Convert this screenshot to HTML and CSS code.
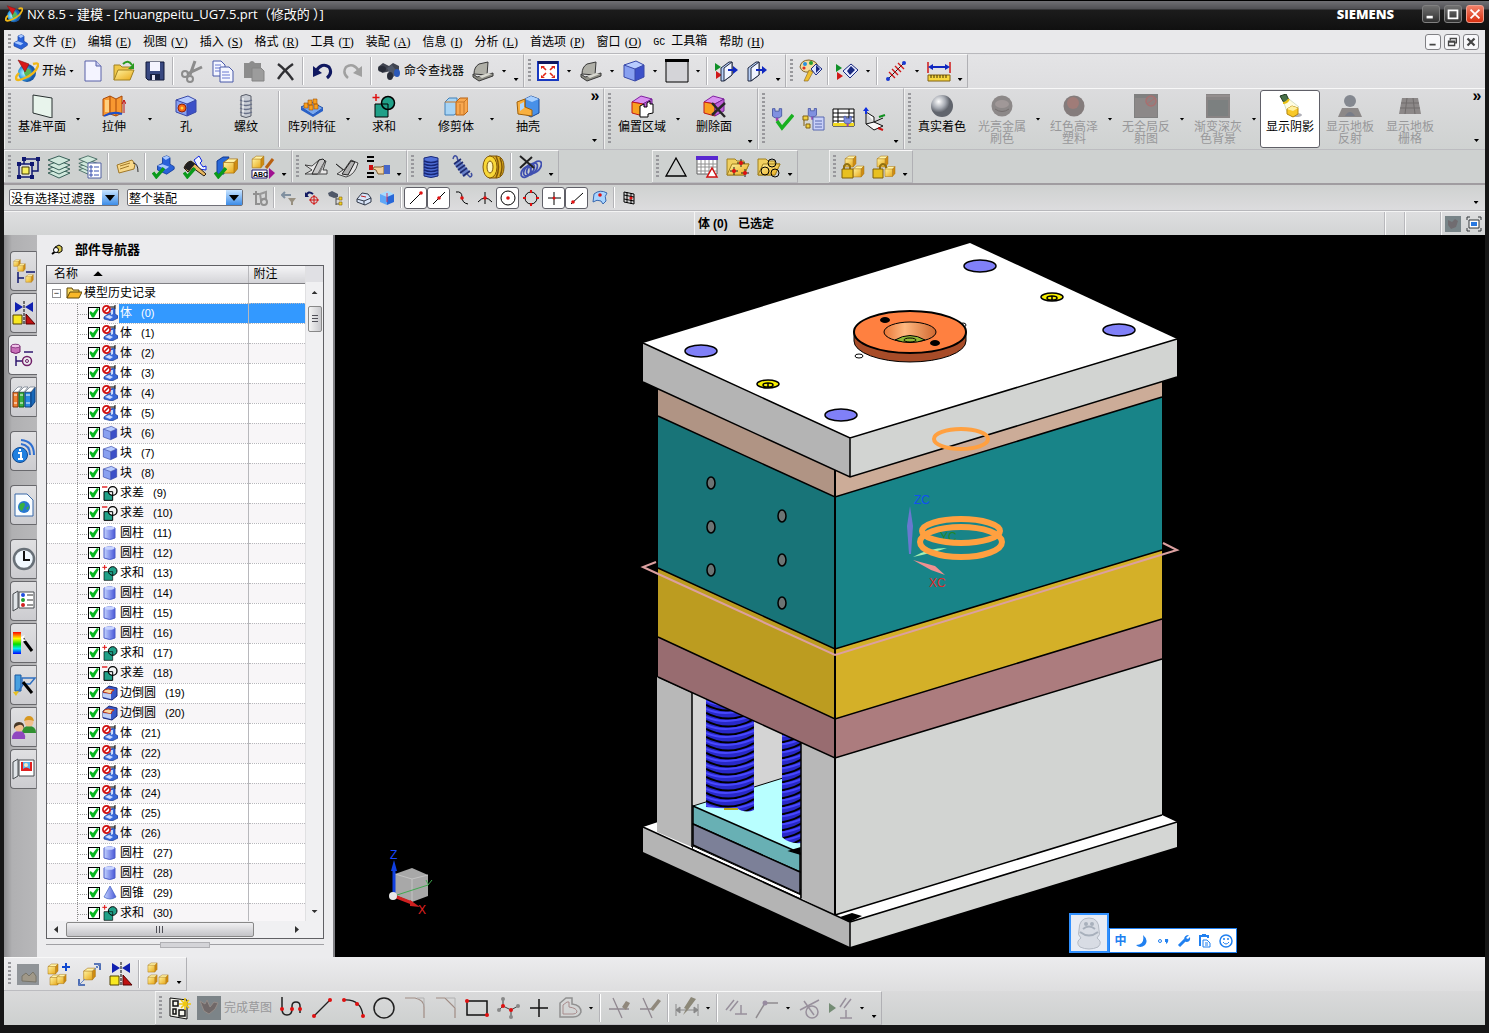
FILE: index.html
```html
<!DOCTYPE html>
<html lang="zh-CN">
<head>
    <meta charset="utf-8">
    <title>NX 8.5 - 建模</title>
    <link rel="stylesheet" href="styles.css">
</head>
<body>
    <!-- icon sprite -->
    <svg class="sprite" width="0" height="0">
        <defs>
            <linearGradient id="g-blue"><stop offset="0" stop-color="#c4d4ff"/><stop offset="1" stop-color="#4a58d8"/></linearGradient>
            <linearGradient id="g-sel" x2="0" y2="1"><stop offset="0" stop-color="#7fc4ff"/><stop offset="1" stop-color="#1668d8"/></linearGradient>
            <linearGradient id="g-yel" x2="1" y2="1"><stop offset="0" stop-color="#fff3a0"/><stop offset="1" stop-color="#e8a818"/></linearGradient>
            <linearGradient id="g-rain" x2="0" y2="1"><stop offset="0" stop-color="#f00"/><stop offset=".3" stop-color="#ff0"/><stop offset=".55" stop-color="#0d0"/><stop offset=".75" stop-color="#0ee"/><stop offset="1" stop-color="#00f"/></linearGradient>
            <radialGradient id="g-ball" cx=".35" cy=".3"><stop offset="0" stop-color="#fff"/><stop offset=".6" stop-color="#a8acb4"/><stop offset="1" stop-color="#60646c"/></radialGradient>
            <radialGradient id="g-globe" cx=".35" cy=".5"><stop offset="0" stop-color="#c8f8ff"/><stop offset=".6" stop-color="#38a8e8"/><stop offset="1" stop-color="#1858a8"/></radialGradient>
        </defs>

        <symbol id="cube-y" viewBox="0 0 24 24"><path d="M2 7l7-5h13l-5 5z" fill="#fff4a8"/><path d="M2 7h15v15H2z" fill="url(#g-yel)"/><path d="M17 7l5-5v14l-5 6z" fill="#d08c10"/><path d="M2 7l7-5h13v14l-5 6H2zM2 7h15v15M17 7l5-5" fill="none" stroke="#a87008"/></symbol>
        <symbol id="cube-b" viewBox="0 0 24 24"><path d="M2 6l12-4 8 4-9 4z" fill="#b8ccff"/><path d="M2 6l11 4v12L2 18z" fill="#88a0f0"/><path d="M13 10l9-4v12l-9 4z" fill="#3c50c8"/><path d="M2 6l12-4 8 4v12l-9 4-11-4zM2 6l11 4v12M13 10l9-4" fill="none" stroke="#3848a8"/></symbol>
        <symbol id="ok" viewBox="0 0 12 12"><path d="M1 6l3 4 7-8" fill="none" stroke="#0a9a1a" stroke-width="3"/></symbol>
        <symbol id="block-l" viewBox="0 0 24 24"><path d="M3 13l6-3V3l5-2 4 2v8l5 3v3l-9 6-11-5z" fill="#2a62d8" stroke="#123c9c"/><path d="M9 3l5-2 4 2-5 3zM3 13l6-2 8 3-4 3z" fill="#a8c8ff"/></symbol>

        <symbol id="nx" viewBox="0 0 24 24"><circle cx="12" cy="14" r="9" fill="url(#g-globe)"/><path d="M9 10q6-2 7 3l-3 6q-5-3-4-9z" fill="#58b858"/><path d="M18 5q6-2 5 2-3 8-13 12-9 4-9 0 0-2 3-5" fill="none" stroke="#f0b818" stroke-width="2.400"/><path d="M3 1l11 4-4 8z" fill="#d81818" stroke="#801010" stroke-width=".6"/></symbol>
        <symbol id="new" viewBox="0 0 24 24"><path d="M4 2h11l5 5v15H4z" fill="#f4f4ff" stroke="#5860a8"/><path d="M15 2v5h5" fill="#c8ccf0" stroke="#5860a8"/></symbol>
        <symbol id="open" viewBox="0 0 24 24"><path d="M2 21V6h6l2 2h9v5" fill="#f0c848" stroke="#a08020"/><path d="M2 21l4-10h16l-4 10z" fill="url(#g-yel)" stroke="#a08020"/><path d="M11 5q5-5 9 1" fill="none" stroke="#2a9a20" stroke-width="2"/><path d="M22 4v6h-6z" fill="#2a9a20"/></symbol>
        <symbol id="save" viewBox="0 0 24 24"><path d="M3 3h18v18H5l-2-2z" fill="#384880" stroke="#101838"/><path d="M7 3h10v9H7z" fill="#f4f4ff"/><path d="M7 15h10v6H7z" fill="#182040"/><path d="M9 16h3v5H9z" fill="#e0e0f0"/></symbol>
        <symbol id="cut" viewBox="0 0 24 24"><path d="M15 2l-5 14M22 8L7 15" stroke="#8c8c8c" stroke-width="3" fill="none"/><circle cx="5" cy="15" r="3" fill="none" stroke="#8c8c8c" stroke-width="2"/><circle cx="10" cy="20" r="3" fill="none" stroke="#8c8c8c" stroke-width="2"/></symbol>
        <symbol id="copy" viewBox="0 0 24 24"><path d="M2 2h8l4 4v11H2z" fill="#f4f6ff" stroke="#4858a8"/><path d="M9 8h9l4 4v11H9z" fill="#f4f6ff" stroke="#4858a8"/><path d="M4 6h6M4 9h5M4 12h5M11 13h7M11 16h8M11 19h8" stroke="#6878d0"/></symbol>
        <symbol id="paste" viewBox="0 0 24 24"><path d="M2 4h5q3-4 6 0h6v15H2z" fill="#8c8c8c"/><path d="M10 9h9l3 3v10H10z" fill="#9c9c9c" stroke="#848484"/></symbol>
        <symbol id="del" viewBox="0 0 24 24"><path d="M5 5q8 6 15 16M20 5Q11 11 5 20" stroke="#303034" stroke-width="2.400" fill="none"/></symbol>
        <symbol id="undo" viewBox="0 0 24 24"><path d="M6 12q6-9 13-4 4 6-2 11" fill="none" stroke="#101860" stroke-width="3"/><path d="M3 7v11l9-4z" fill="#101860"/></symbol>
        <symbol id="redo" viewBox="0 0 24 24"><path d="M18 12q-6-9-13-4-4 6 2 11" fill="none" stroke="#a0a0a0" stroke-width="2.400"/><path d="M21 7v11l-9-4z" fill="#a0a0a0"/></symbol>
        <symbol id="find" viewBox="0 0 24 24"><path d="M1 8l5-4 6 3 4-3 6 3v4l-8 1-9 2z" fill="#404450"/><ellipse cx="5" cy="10" rx="4" ry="3" fill="#282c38"/><path d="M10 9l5-3 6 8-6 5z" fill="#505868"/><ellipse cx="13" cy="17" rx="3" ry="4" fill="#282c38"/><ellipse cx="20" cy="14" rx="3" ry="4" fill="#2a58b8"/></symbol>
        <symbol id="laptop" viewBox="0 0 24 24"><path d="M3 15q0-7 5-10l9-2-1 13z" fill="#b0b0a8" stroke="#383838"/><path d="M2 15l4 3 16-4v3L8 22l-6-4z" fill="#8c8c84" stroke="#383838"/><path d="M8 17l9-3 4 1-10 4z" fill="#d8d8d0"/></symbol>
        <symbol id="fit" viewBox="0 0 24 24"><path d="M2 3h20v18H2z" fill="#fff" stroke="#1838c0" stroke-width="2"/><path d="M2 2h20v3H2z" fill="#101860"/><path d="M10 11L7 8M14 11l3-3M10 14l-3 3M14 14l3 3" stroke="#e02818" stroke-width="1.600"/><path d="M5 7h4l-4 3zM19 7h-4l4 3zM5 19h4l-4-3zM19 19h-4l4-3z" fill="#e02818"/></symbol>
        <symbol id="rect" viewBox="0 0 24 24"><path d="M1 1h22v22H1z" fill="#d4d4d8" stroke="#000"/><path d="M0 0h24v3H0z"/></symbol>
        <symbol id="book-a" viewBox="0 0 24 24"><path d="M1 4l6 4-6 4z" fill="#109028"/><path d="M2 12l6 4-6 4z" fill="#d01818"/><path d="M7 9l8-6h3v13l-8 6H7z" fill="#b8d0f8" stroke="#202840"/><path d="M10 9l8-6v13l-8 6z" fill="#f0f4ff" stroke="#202840"/><path d="M14 11h6" stroke="#1028c0" stroke-width="2"/><path d="M19 7l5 4-5 4z" fill="#1028c0"/></symbol>
        <symbol id="book-b" viewBox="0 0 24 24"><path d="M3 9l8-6h3v13l-8 6H3z" fill="#b8d0f8" stroke="#202840"/><path d="M6 9l8-6v13l-8 6z" fill="#f0f4ff" stroke="#202840"/><path d="M11 11h7" stroke="#1028c0" stroke-width="2"/><path d="M17 7l5 4-5 4z" fill="#1028c0"/></symbol>
        <symbol id="palette" viewBox="0 0 24 24"><path d="M2 8q1-7 9-7 9 1 9 8-1 4-6 3l-3 1q-7 1-9-5z" fill="#f4dca0" stroke="#806020"/><circle cx="7" cy="5" r="2" fill="#2890e0"/><circle cx="13" cy="4" r="2" fill="#28a030"/><circle cx="6" cy="9" r="1.600" fill="#e03020"/><path d="M6 22l5-11 4 2-5 9z" fill="#f0c030" stroke="#806020" stroke-width=".6"/><path d="M13 10l5-5 6 5-6 6z" fill="#dce4ff" stroke="#182880"/><path d="M18 6l4 4-4 4z" fill="#182880"/></symbol>
        <symbol id="showhide" viewBox="0 0 24 24"><path d="M1 5l6 4-6 4z" fill="#109028"/><path d="M2 13l6 4-6 4z" fill="#d01818"/><path d="M8 12l8-7 7 6-8 8z" fill="#e8ecff" stroke="#182880"/><path d="M12 12l4-5 4 4-5 5z" fill="#182880"/></symbol>
        <symbol id="measure" viewBox="0 0 24 24"><path d="M4 20L20 4" stroke="#181818"/><path d="M5 13l6 6M8 10l6 6M11 7l6 6M14 4l6 6" stroke="#d01818" stroke-width="1.400"/><circle cx="4" cy="20" r="2" fill="#1838d0"/><circle cx="20" cy="4" r="2" fill="#1838d0"/></symbol>
        <symbol id="ruler" viewBox="0 0 24 24"><path d="M1 3v11M23 3v11" stroke="#d01818" stroke-width="1.500"/><path d="M3 8h18" stroke="#1028c0" stroke-width="2"/><path d="M1 8l5-3v6zM23 8l-5-3v6z" fill="#1028c0"/><path d="M1 16h22v6H1z" fill="#f8d840" stroke="#806010"/><path d="M4 16v3M7 16v3M10 16v3M13 16v3M16 16v3M19 16v3" stroke="#403000"/></symbol>

        <symbol id="plane" viewBox="0 0 24 24"><path d="M3 1l19 3v20L3 19z" fill="#e8f4ec" stroke="#283030"/></symbol>
        <symbol id="extrude" viewBox="0 0 24 24"><path d="M1 5l7-3 6 3 6-3v17l-6 3-6-2-7 2z" fill="#f89830" stroke="#a84808"/><path d="M8 2v18M14 5v17" stroke="#a84808"/><path d="M3 6h4v12H3z" fill="#ffd080"/><path d="M2 22q9-5 18-2" stroke="#2050c8" stroke-width="2" fill="none"/><path d="M22 6v13M20 10l2-4 2 4" stroke="#c01010" fill="none"/></symbol>
        <symbol id="hole" viewBox="0 0 24 24"><use href="#cube-b"/><circle cx="8" cy="14" r="4" fill="#f86818" stroke="#902008"/><circle cx="8" cy="14" r="1.500" fill="#ffd040"/></symbol>
        <symbol id="thread" viewBox="0 0 24 24"><path d="M7 2q5-3 10 0v20q-5 3-10 0z" fill="#c8ccd4" stroke="#585c68"/><path d="M6 6q6 3 12 0M6 10q6 3 12 0M6 14q6 3 12 0M6 18q6 3 12 0" fill="none" stroke="#687088" stroke-width="1.300"/><path d="M9 4v17" stroke="#fff"/></symbol>
        <symbol id="pattern" viewBox="0 0 24 24"><path d="M1 13l11-5 11 6-10 7z" fill="#78a8f0" stroke="#2050a8"/><path d="M1 13v3l12 7 10-6v-3l-10 7z" fill="#2860c8"/><g fill="#f8a020" stroke="#a05008" stroke-width=".6"><path d="M4 9h4v5H4zM8 6h4v5H8zM13 5h4v5h-4zM9 11h4v5H9zM14 10h4v5h-4z"/></g></symbol>
        <symbol id="unite" viewBox="0 0 24 24"><path d="M3 10h13v13H3z" fill="#20a088" stroke="#000"/><circle cx="16" cy="9" r="6.500" fill="#20a088" stroke="#000" stroke-width="1.500"/><path d="M9.500 10h6.500v5.500" fill="none" stroke="#000"/><path d="M4 0v7M0.500 3.500h7" stroke="#e01010" stroke-width="1.500"/></symbol>
        <symbol id="subtract" viewBox="0 0 24 24"><path d="M3 10h13v13H3z" fill="#20a088" stroke="#000" stroke-width="1.500"/><circle cx="16" cy="9" r="6.500" fill="#f4f4f4" stroke="#000" stroke-width="2"/><path d="M10 10h6v5" fill="none" stroke="#000" stroke-width="1.500"/><path d="M0 3h8" stroke="#e01010" stroke-width="2"/></symbol>
        <symbol id="trim" viewBox="0 0 24 24"><path d="M1 8l4-4h8v15l-3 2H1z" fill="#a8d4f4" stroke="#4080b8"/><path d="M12 8l4-4h8v13l-4 4h-8z" fill="#f8a850" stroke="#b86010"/><path d="M12 8h8l4-4M20 8v13M1 8h11M16 10v10" stroke="#c87828" fill="none"/></symbol>
        <symbol id="shell" viewBox="0 0 24 24"><path d="M9 5l6-3 8 3v14l-8 4-6-3z" fill="#4890e8" stroke="#184898"/><path d="M9 5l6-3 8 3-7 3z" fill="#a8d0ff"/><path d="M1 8l8-3v8l7 3v6L2 20z" fill="#f8b040" stroke="#a06008"/><path d="M4 10l4-2v6l-4 3z" fill="#b0d8ff"/></symbol>
        <symbol id="cube-m" viewBox="0 0 24 24"><path d="M2 8l9-6 11 3-9 5z" fill="#d890f0" stroke="#8020a0"/><path d="M2 8l11 2v12L2 19z" fill="#f8a020" stroke="#c01818"/><path d="M13 10l9-5v12l-9 5z" fill="#c060d8" stroke="#702090"/></symbol>
        <symbol id="offset" viewBox="0 0 24 24"><use href="#cube-m"/><path d="M10 12l4-2v3h3V9l3-2v3h3v9l-5 1v3h-8z" fill="#fff" stroke="#000"/></symbol>
        <symbol id="delface" viewBox="0 0 24 24"><use href="#cube-m"/><path d="M10 9l13 14M23 9L10 21" stroke="#282828" stroke-width="2.400"/></symbol>
        <symbol id="plug" viewBox="0 0 24 24"><path d="M3 2h3v3h5V2h3v9l-3 2H6l-3-2z" fill="#8090e0" stroke="#4050a0"/><path d="M7 13h3v4H7z" fill="#a040b0"/></symbol>
        <symbol id="pchk" viewBox="0 0 24 24"><use href="#plug" width="20" height="20"/><path d="M7 14l5 7L23 8" fill="none" stroke="#18b020" stroke-width="3.500"/></symbol>
        <symbol id="ptree" viewBox="0 0 24 24"><use href="#plug" x="5" width="18" height="18"/><path d="M2 9h5v4H2zM5 17h4v4H5zM3 13v6" fill="#f0d040" stroke="#806010"/><path d="M12 10h11v13H12z" fill="#c8d0f8" stroke="#5868b0"/><path d="M14 14h7M14 17h7M14 20h7" stroke="#5868b0"/></symbol>
        <symbol id="pgrid" viewBox="0 0 24 24"><path d="M1 2h21v17H1z" fill="#fff" stroke="#000"/><path d="M1 6h21M1 10h21M1 14h21M6 2v17M17 2v17" stroke="#000"/><path d="M1 16h21v3H1z" fill="#f0d820"/><use href="#plug" x="10" y="8" width="16" height="16"/></symbol>
        <symbol id="csys" viewBox="0 0 24 24"><path d="M3 5v12l8-2 9 4-9 4-8-6M3 5l8 5v5M11 15l9-4" fill="#f8f8f8" stroke="#101010"/><path d="M3 7V1" stroke="#1030e0" stroke-width="2"/><path d="M0 4h6L3 0z" fill="#1030e0"/><path d="M16 10l6-2" stroke="#109020" stroke-width="2"/><path d="M15 21l5 2" stroke="#d01010" stroke-width="2"/></symbol>
        <symbol id="ball" viewBox="0 0 24 24"><circle cx="12" cy="12" r="11" fill="url(#g-ball)"/></symbol>
        <symbol id="metal" viewBox="0 0 24 24"><circle cx="12" cy="12" r="10.500" fill="#8c8888"/><ellipse cx="12" cy="10" rx="7" ry="4" fill="#a09898"/><path d="M5 15q7 5 14 0" stroke="#746e6e" fill="none"/></symbol>
        <symbol id="plastic" viewBox="0 0 24 24"><circle cx="12" cy="12" r="10.500" fill="#847c7c"/><circle cx="11" cy="9" r="6" fill="#a07c78"/></symbol>
        <symbol id="gray-a" viewBox="0 0 24 24"><path d="M0 0h24v24H0z" fill="#808080"/><path d="M1 4h22v19H1z" fill="#8c8888"/><circle cx="17" cy="7" r="5" fill="#908080" stroke="#a87070" stroke-width="1.500"/><path d="M13 10l8-6" stroke="#a87070"/></symbol>
        <symbol id="gray-b" viewBox="0 0 24 24"><path d="M0 0h24v24H0z" fill="#888484"/><path d="M2 6h20v16H2z" fill="#7c8080"/><path d="M0 2h24" stroke="#a09898"/></symbol>
        <symbol id="lamp" viewBox="0 0 24 24"><path d="M2 2l6-2 3 6-5 3z" fill="#487048" stroke="#203820"/><path d="M6 9l5-4 10 8-11 8z" fill="#fffce0" stroke="#a8c0a0" stroke-width=".5"/><ellipse cx="18" cy="21" rx="6" ry="2" fill="#b0b0b8"/><path d="M9 15l5-3 6 2v6l-5 3-6-3z" fill="#f8c828" stroke="#b88810"/><path d="M9 15l6 2 5-3-6-2z" fill="#fff0a0"/><path d="M5 9q4 0 6-4" stroke="#e8c010" stroke-width="2" fill="none"/></symbol>
        <symbol id="floor-a" viewBox="0 0 24 24"><path d="M4 14h16l4 9H0z" fill="#8c8888"/><circle cx="12" cy="7" r="6" fill="#848890"/><path d="M7 22q5-8 10 0z" fill="#787c88"/></symbol>
        <symbol id="floor-b" viewBox="0 0 24 24"><path d="M4 4h16l3 16H1z" fill="#8c8888"/><path d="M3 9h18M2 14h20M9 4L7 20M15 4l2 16" stroke="#706c6c"/></symbol>

        <symbol id="layerset" viewBox="0 0 24 24"><path d="M8 4h14v12H8z" fill="none" stroke="#101870" stroke-width="1.500"/><path d="M3 9h13v13H3z" fill="#d8d8dc" stroke="#101870" stroke-width="1.500"/><path d="M6 12h7v7H6z" fill="#f8f060" stroke="#403800"/><path d="M1 7h4v4H1zM14 7h4v4h-4zM1 20h4v4H1zM14 20h4v4h-4zM20 2h4v4h-4zM6 2h4v4H6z" fill="#101870"/></symbol>
        <symbol id="layers" viewBox="0 0 24 24"><g fill="#d0e8dc" stroke="#386058"><path d="M1 18l11-4 11 4-11 5z"/><path d="M1 14l11-4 11 4-11 5z"/><path d="M1 10l11-4 11 4-11 5z"/><path d="M1 5l11-4 11 4-11 5z"/></g></symbol>
        <symbol id="layerlist" viewBox="0 0 24 24"><use href="#layers" width="20" height="20"/><path d="M10 8h13v15H10z" fill="#fff" stroke="#5060a0"/><path d="M12 11h2v2h-2zM12 15h2v2h-2zM12 19h2v2h-2zM16 12h5M16 16h5M16 20h5" stroke="#3850b0" fill="none"/></symbol>
        <symbol id="tag" viewBox="0 0 24 24"><path d="M2 10l15-5 3 4-1 5-15 4z" fill="#f8d888" stroke="#a07828"/><path d="M5 11l10-3M5 14l9-3" stroke="#a07828"/><path d="M18 8q5 0 5 9" fill="none" stroke="#303030"/></symbol>
        <symbol id="chk-a" viewBox="0 0 24 24"><use href="#block-l" x="2" width="22" height="20"/><use href="#ok" y="11" width="13" height="13"/></symbol>
        <symbol id="chk-b" viewBox="0 0 24 24"><path d="M11 5l5-4 3 5-2 2 3 4 3-1v4l-7-1z" fill="#f0f4ff" stroke="#1028e0"/><path d="M1 13q2-6 7-7l4 3 11 10-2 2-11-8-5 4z" fill="#e8b860" stroke="#302010"/><path d="M1 13q2-6 7-7l4 3-6 7z" fill="#202020"/><use href="#ok" y="11" width="13" height="13"/></symbol>
        <symbol id="chk-c" viewBox="0 0 24 24"><path d="M3 6l6-4h6l-2 4-3 1v12H3z" fill="#2868d8" stroke="#103890"/><use href="#cube-y" x="8" y="2" width="17" height="18"/><use href="#ok" y="11" width="13" height="13"/></symbol>
        <symbol id="strip-a" viewBox="0 0 24 24"><path d="M1 10l7 1 7-6 7 1-3 9h4v4H1l7-4z" fill="#e8e8e8" stroke="#202020" stroke-width=".8"/><path d="M8 19l7-14 4-1 2 2-7 13z" fill="#c8c8c8" stroke="#202020"/><path d="M13 20l5-10 3-3-5 12z" fill="#787878"/></symbol>
        <symbol id="strip-b" viewBox="0 0 24 24"><path d="M1 9l8 6 7-10 7 3q-3 12-12 14l-9-3 6-4z" fill="#e4e4e4" stroke="#202020" stroke-width=".8"/><path d="M7 19l9-13 4 1-7 13z" fill="#b0b0b0" stroke="#202020"/></symbol>
        <symbol id="hand" viewBox="0 0 24 24"><path d="M1 2h7M1 6h7M1 18h7M1 22h7" stroke="#000" stroke-width="2"/><path d="M3 10h4v5H3z" fill="#d01010"/><path d="M8 12h7l3-1v8h-6l-2-4-3-1z" fill="#f0d0a0" stroke="#806030"/><path d="M18 10h6v9h-6z" fill="#4868c8"/></symbol>
        <symbol id="spring-a" viewBox="0 0 24 24"><path d="M5 3q7-3 14 0v18q-7 3-14 0z" fill="#5070d8" stroke="#182878"/><path d="M5 6q7 3 14 0M5 9q7 3 14 0M5 12q7 3 14 0M5 15q7 3 14 0M5 18q7 3 14 0" fill="none" stroke="#182878" stroke-width="1.500"/></symbol>
        <symbol id="spring-b" viewBox="0 0 24 24"><path d="M3 4q1-5 4-2l1 4M17 19l3 3q3-1 1-4" fill="none" stroke="#4050a0" stroke-width="1.500"/><path d="M9 4l11 13-6 5L4 9z" fill="#6880c8"/><path d="M4 9l7-5M6 12l7-5M8 15l7-5M10 18l7-5M13 21l7-5" stroke="#202c70" stroke-width="1.600"/></symbol>
        <symbol id="spring-c" viewBox="0 0 24 24"><path d="M8 1h8q7 1 7 11t-7 11H8z" fill="#e0b020" stroke="#805808"/><path d="M15 1q5 11 0 22M19 3q4 9 0 18" fill="none" stroke="#805808" stroke-width="1.500"/><ellipse cx="9" cy="12" rx="7" ry="11" fill="#f8d838" stroke="#805808"/><ellipse cx="9" cy="12" rx="3" ry="6" fill="#fff8c0" stroke="#805808"/></symbol>
        <symbol id="spring-x" viewBox="0 0 24 24"><g fill="none" stroke="#4050b0" stroke-width="1.800"><ellipse cx="8" cy="17" rx="4" ry="6" transform="rotate(40 8 17)"/><ellipse cx="11" cy="15" rx="4" ry="7" transform="rotate(40 11 15)"/><ellipse cx="14" cy="14" rx="4" ry="7" transform="rotate(40 14 14)"/><ellipse cx="18" cy="12" rx="4" ry="7" transform="rotate(40 18 12)"/></g><path d="M2 1l14 12M14 2L2 13" stroke="#202020" stroke-width="2"/></symbol>
        <symbol id="tri" viewBox="0 0 24 24"><path d="M12 3l10 18H2z" fill="none" stroke="#000" stroke-width="1.300"/></symbol>
        <symbol id="grid-t" viewBox="0 0 24 24"><path d="M2 2h20v17H2z" fill="#fff" stroke="#606060"/><path d="M2 9h20M2 12h20M2 16h20M6 5v14M10 5v14M14 5v14M18 5v14" stroke="#909090"/><path d="M1 1h22v4H1z" fill="#5828d0"/><path d="M17 13l5 9H12z" fill="#fff" stroke="#d01010" stroke-width="1.500"/></symbol>
        <symbol id="folder" viewBox="0 0 24 24"><path d="M1 20V4h8l2 2h7v3h5l-5 11z" fill="#f0d060" stroke="#a08020"/><path d="M1 20l5-11h17l-5 11z" fill="url(#g-yel)" stroke="#a08020"/></symbol>
        <symbol id="fold-a" viewBox="0 0 24 24"><use href="#folder"/><path d="M15 4v8M11 8h8M8 12v8M4 16h8M19 14v8M15 18h8" stroke="#202020"/><circle cx="15" cy="8" r="2" fill="#e01010"/><circle cx="8" cy="16" r="2" fill="#e01010"/><circle cx="19" cy="18" r="2" fill="#e01010"/></symbol>
        <symbol id="fold-b" viewBox="0 0 24 24"><use href="#folder"/><g fill="none" stroke="#000"><circle cx="15" cy="8" r="4"/><circle cx="8" cy="16" r="4"/><circle cx="18" cy="18" r="4"/></g></symbol>
        <symbol id="lock-a" viewBox="0 0 24 24"><use href="#cube-y" x="3" width="13" height="13"/><use href="#cube-y" x="11" y="10" width="13" height="13"/><path d="M3 15v-4q3-4 6 0v4" fill="none" stroke="#907010" stroke-width="2"/><path d="M1 14h11v9H1z" fill="#e8c020" stroke="#806008"/></symbol>
        <symbol id="lock-b" viewBox="0 0 24 24"><use href="#cube-y" x="4" width="13" height="13"/><use href="#cube-y" x="12" y="10" width="12" height="13"/><path d="M8 15v-4q3-4 6 0v2" fill="none" stroke="#907010" stroke-width="2"/><path d="M1 14h10v9H1z" fill="#e8c020" stroke="#806008"/></symbol>

        <symbol id="s-gear" viewBox="0 0 16 16"><path d="M1 4h6M4 1v13h4" stroke="#909090" stroke-width="2" fill="none"/><path d="M8 4l6-2v6l-5 2z" fill="none" stroke="#989898" stroke-width="2"/><circle cx="12" cy="12" r="3" fill="none" stroke="#909090" stroke-width="2"/></symbol>
        <symbol id="s-filter" viewBox="0 0 16 16"><path d="M1 5h9M4 2L1 5l3 3" stroke="#8090a0" stroke-width="2" fill="none"/><path d="M7 8h8l-3 4v3h-2v-3z" fill="#989080"/></symbol>
        <symbol id="s-target" viewBox="0 0 16 16"><path d="M2 6q2-6 7-2" fill="none" stroke="#101860" stroke-width="2"/><path d="M1 2v5h4z" fill="#101860"/><circle cx="10" cy="10" r="3.500" fill="none" stroke="#d01010"/><path d="M10 5v10M5 10h10" stroke="#d01010"/></symbol>
        <symbol id="s-find" viewBox="0 0 16 16"><path d="M1 3l4-2 6 3v3l-4 1-5-2z" fill="#505868"/><path d="M9 6v9M9 9h3M9 14h3" stroke="#505050"/><path d="M12 7h3v3h-3zM12 12h3v3h-3z" fill="#f0d020" stroke="#806010" stroke-width=".6"/></symbol>
        <symbol id="s-cube" viewBox="0 0 16 16"><path d="M1 9l5-6 6 1 3 4v4l-6 3-8-3z" fill="#d8e4f8" stroke="#303848"/><path d="M1 9l7 2 7-3M8 11v4" fill="none" stroke="#303848"/><path d="M5 6l5 1" stroke="#c02020"/></symbol>
        <symbol id="s-cube2" viewBox="0 0 16 16"><path d="M1 4l8-3 6 3-7 3z" fill="#a8dcff"/><path d="M1 4l7 3v8l-7-3z" fill="#60a8f8"/><path d="M8 7l7-3v8l-7 3z" fill="#2868d8"/><path d="M8 3v9" stroke="#d03060"/></symbol>
        <symbol id="s-end" viewBox="0 0 16 16"><path d="M2 14L12 4" stroke="#000"/><circle cx="13" cy="3" r="1.800" fill="#e01010"/></symbol>
        <symbol id="s-mid" viewBox="0 0 16 16"><path d="M2 14L14 2" stroke="#000"/><circle cx="8" cy="8" r="1.800" fill="#e01010"/></symbol>
        <symbol id="s-ctl" viewBox="0 0 16 16"><path d="M2 2q6-1 6 5t6 7" fill="none" stroke="#000"/><circle cx="8" cy="8" r="1.800" fill="#e01010"/></symbol>
        <symbol id="s-int" viewBox="0 0 16 16"><path d="M1 12q7-8 14 0M8 2v12" fill="none" stroke="#000"/><circle cx="8" cy="8" r="1.800" fill="#e01010"/></symbol>
        <symbol id="s-cen" viewBox="0 0 16 16"><circle cx="8" cy="8" r="7" fill="none" stroke="#000"/><circle cx="8" cy="8" r="1.800" fill="#e01010"/></symbol>
        <symbol id="s-quad" viewBox="0 0 16 16"><circle cx="8" cy="8" r="6" fill="none" stroke="#000"/><path d="M7 0h2v3H7zM7 13h2v3H7zM0 7h3v2H0zM13 7h3v2h-3z" fill="#e01010"/></symbol>
        <symbol id="s-pt" viewBox="0 0 16 16"><path d="M8 2v13M2 8h13" stroke="#000"/><circle cx="8" cy="8" r="1.500" fill="#e01010"/></symbol>
        <symbol id="s-on" viewBox="0 0 16 16"><path d="M2 14L14 3" stroke="#000"/><circle cx="4" cy="12" r="1.800" fill="#e01010"/></symbol>
        <symbol id="s-face" viewBox="0 0 16 16"><path d="M2 4q6-5 13-1-3 3-1 8l-3 3-2-3q-4-2-8 1z" fill="#a8d4ff" stroke="#3868b0"/><circle cx="8" cy="5" r="1.800" fill="#e01010"/></symbol>
        <symbol id="s-mesh" viewBox="0 0 16 16"><path d="M3 2l10 2v10L3 12zM3 5l10 2M3 9l10 2M6 2v11M10 3v11" fill="none" stroke="#000"/><circle cx="10" cy="8" r="1.600" fill="#e01010"/></symbol>

        <symbol id="t-asm" viewBox="0 0 24 24"><use href="#cube-y" x="1" width="8" height="8"/><use href="#cube-y" x="5" y="4" width="9" height="9"/><path d="M6 13v11M6 19h6M14 13h9" stroke="#101870" stroke-width="1.500"/><use href="#cube-y" x="13" y="15" width="9" height="9"/></symbol>
        <symbol id="t-con" viewBox="0 0 24 24"><path d="M3 1l8 5-8 5zM21 1l-8 5 8 5z" fill="#1020b0"/><path d="M12 0v24" stroke="#000" stroke-dasharray="3 1"/><path d="M1 14h9v9H1z" fill="#f8e820" stroke="#504000"/><path d="M14 13l9 10h-9z" fill="#c01010" stroke="#500"/></symbol>
        <symbol id="t-part" viewBox="0 0 24 24"><path d="M1 3q5-3 9 0v6q-4 3-9 0z" fill="#c870b8" stroke="#702068"/><ellipse cx="5.500" cy="3" rx="4.500" ry="1.800" fill="#f0c0e8" stroke="#702068" stroke-width=".7"/><path d="M6 13v10M6 18h6M14 9h9" stroke="#301870" stroke-width="1.500"/><circle cx="17" cy="18" r="4.500" fill="none" stroke="#702068" stroke-width="1.500"/><circle cx="17" cy="18" r="1.500" fill="none" stroke="#702068"/></symbol>
        <symbol id="t-books" viewBox="0 0 24 24"><path d="M1 7h5v15H1z" fill="#f08030" stroke="#803008"/><path d="M7 7h5v15H7z" fill="#38b040" stroke="#105818"/><path d="M13 7h6v15h-6z" fill="#2888e0" stroke="#0c4080"/><path d="M19 7l4-5v15l-4 5z" fill="#1868b8" stroke="#0c4080"/><path d="M1 7l5-5h4L6 7zM7 7l5-5h4l-4 5zM13 7l5-5h5l-4 5z" fill="#fff" stroke="#506070" stroke-width=".6"/><path d="M2 10h3M8 10h3M14 10h4M2 18h3M8 18h3M14 18h4" stroke="#fff"/></symbol>
        <symbol id="t-info" viewBox="0 0 24 24"><path d="M9 1q13 1 13 15M9 5q9 1 9 11" fill="none" stroke="#3070d0" stroke-width="2"/><circle cx="8" cy="16" r="7.500" fill="#2080e0" stroke="#104890"/><path d="M6 14h3v6M6 20h5M8 10v2" stroke="#fff" stroke-width="2" fill="none"/></symbol>
        <symbol id="t-web" viewBox="0 0 24 24"><path d="M3 1h12l6 6v16H3z" fill="#f8fcff" stroke="#3868a8"/><circle cx="12" cy="14" r="6" fill="#2878d0"/><path d="M8 11q5-3 5 1l-3 6q-4-2-2-7zM14 15l3-2-1 4z" fill="#38b040"/></symbol>
        <symbol id="t-clock" viewBox="0 0 24 24"><circle cx="12" cy="12" r="10" fill="#f0f8ff" stroke="#687078" stroke-width="2.500"/><path d="M12 4v9h6" fill="none" stroke="#101010" stroke-width="2"/></symbol>
        <symbol id="t-pal" viewBox="0 0 24 24"><path d="M1 5l5-3v17l-5 3z" fill="#e0e4e8" stroke="#484c50"/><path d="M7 3h15v16H7z" fill="#fff" stroke="#484c50"/><circle cx="11" cy="6" r="2" fill="#2050e0"/><circle cx="11" cy="11" r="2" fill="#20a030"/><circle cx="11" cy="16" r="2" fill="#d02020"/><path d="M15 6h6M15 11h6M15 16h6" stroke="#303030"/></symbol>
        <symbol id="t-rain" viewBox="0 0 24 24"><path d="M1 1h8v22H1z" fill="url(#g-rain)"/><path d="M11 8l9 12" stroke="#000" stroke-width="3"/><path d="M8 2l1 4 4-2-2 4 4 1-5 2z" fill="#fff"/></symbol>
        <symbol id="t-cad" viewBox="0 0 24 24"><path d="M3 2h6v16H3z" fill="#48a0e0" stroke="#1858a0"/><path d="M10 5h13l-5 6h-8zM12 10l-6 9" fill="none" stroke="#3070c0" stroke-width="1.500"/><path d="M11 9l9 11" stroke="#000" stroke-width="3"/><path d="M1 19l6-1-3 5z" fill="#e8c020"/></symbol>
        <symbol id="t-ppl" viewBox="0 0 24 24"><path d="M10 18q0-7 7-7t7 7z" fill="#309030"/><circle cx="17" cy="7" r="4.500" fill="#f0c090"/><path d="M12 6q1-5 5-5t5 5q-5-2-10 0z" fill="#d89820"/><path d="M0 24q0-8 7-8t6 8z" fill="#9048c0"/><circle cx="7" cy="12" r="4.500" fill="#f0c090"/><path d="M2 14Q1 7 7 7t5 7q-1-5-5-4t-5 4z" fill="#483828"/></symbol>
        <symbol id="t-pic" viewBox="0 0 24 24"><path d="M1 5l5-3v17l-5 3z" fill="#e0e4e8" stroke="#484c50"/><path d="M7 3h15v16H7z" fill="#fff" stroke="#484c50"/><path d="M9 5h11v9H9z" fill="#e02020"/><path d="M11 5h7v7q-4-3-7 0z" fill="#58b8f0"/><circle cx="14" cy="8" r="2" fill="#f8e8c0"/></symbol>

        <symbol id="n-body" viewBox="0 0 16 16"><path d="M2 12l4-3 3-1V4l2-1 2 1v5l3 2v2l-6 3-8-2z" fill="#3868d8" stroke="#183890" stroke-width=".7"/><path d="M9 5h2v4l-2 1zM3 12l4-2 4 2-3 2z" fill="#c8dcff"/><path d="M8 2h5M13 0v4" stroke="#000"/><circle cx="4.500" cy="4.500" r="3.600" fill="#fff" stroke="#d01010" stroke-width="1.700"/><path d="M2 7l5-5" stroke="#d01010" stroke-width="1.700"/></symbol>
        <symbol id="n-cyl" viewBox="0 0 16 16"><path d="M2 3q6-3 11 0v10q-5 3-11 0z" fill="url(#g-blue)" stroke="#5060c8"/><ellipse cx="7.500" cy="3" rx="5" ry="1.800" fill="#c8d4ff"/></symbol>
        <symbol id="n-cone" viewBox="0 0 16 16"><path d="M8 1l6 11q-6 4-12 0z" fill="url(#g-blue)" stroke="#4060c0" stroke-width=".7"/></symbol>
        <symbol id="n-blend" viewBox="0 0 16 16"><path d="M1 6l6-5 8 2v8l-5 4-9-2z" fill="#3858c8" stroke="#182878"/><path d="M1 7q1-3 5-3l6 1q-3 1-3 4z" fill="#f8d8a0" stroke="#c03010"/><path d="M1 8l8 1v5l-8-2z" fill="#c0d0f8"/></symbol>

        <symbol id="b-gray" viewBox="0 0 24 24"><path d="M1 2h22v21H1z" fill="#909498"/><path d="M6 19v-5l4-3 3 3 4-4 3 4v6z" fill="#a09888" stroke="#787468"/></symbol>
        <symbol id="b-add" viewBox="0 0 24 24"><use href="#cube-y" y="1" width="12" height="12"/><use href="#cube-y" x="2" y="12" width="12" height="12"/><use href="#cube-y" x="9" y="11" width="11" height="12"/><path d="M19 1v8M15 5h8" stroke="#1048d0" stroke-width="2"/></symbol>
        <symbol id="b-move" viewBox="0 0 24 24"><use href="#cube-y" x="4" y="5" width="15" height="14"/><path d="M16 2h6v6M18 5h2M1 17v6h6M3 19" fill="none" stroke="#2850a8" stroke-width="1.600"/><path d="M16 8l6-6M7 17l-6 6" stroke="#6888c8"/></symbol>
        <symbol id="b-three" viewBox="0 0 24 24"><use href="#cube-y" x="1" y="0" width="11" height="11"/><use href="#cube-y" x="1" y="12" width="11" height="11"/><use href="#cube-y" x="12" y="12" width="11" height="11"/></symbol>
        <symbol id="k-sketch" viewBox="0 0 24 24"><path d="M3 2l17 2v19L3 20z" fill="#f4f4ec" stroke="#101010"/><path d="M6 5h5v5H6zM6 13h3v5H6zM12 14h6v6h-6z" fill="none" stroke="#101010" stroke-width="1.500"/><path d="M18 2v12M12 8h12M14 4l8 8M22 4l-8 8" stroke="#f0c810" stroke-width="1.600"/></symbol>
        <symbol id="k-fin" viewBox="0 0 24 24"><path d="M0 0h24v24H0z" fill="#7c8488"/><path d="M3 5l5 3 2-4 3 7 4-5 4 1-3 6-6 5-5-3z" fill="#706868" stroke="#948c88"/></symbol>
        <symbol id="k-prof" viewBox="0 0 24 24"><path d="M3 1v12q0 6 5 6t5-6V10q0-4 4-4t4 4v7" fill="none" stroke="#202020" stroke-width="1.500"/><g fill="#e01010"><circle cx="3" cy="13" r="2"/><circle cx="13" cy="13" r="2"/><circle cx="21" cy="13" r="2"/></g></symbol>
        <symbol id="k-line" viewBox="0 0 24 24"><path d="M4 20L20 4" stroke="#202020" stroke-width="1.300"/><circle cx="4" cy="20" r="2" fill="#e01010"/><circle cx="20" cy="4" r="2" fill="#e01010"/></symbol>
        <symbol id="k-arc" viewBox="0 0 24 24"><path d="M3 4q17-1 19 16" fill="none" stroke="#202020" stroke-width="1.300"/><g fill="#e01010"><circle cx="3" cy="4" r="2"/><circle cx="16" cy="8" r="2"/><circle cx="22" cy="20" r="2"/></g></symbol>
        <symbol id="k-cir" viewBox="0 0 24 24"><circle cx="12" cy="12" r="10" fill="none" stroke="#202020" stroke-width="1.500"/></symbol>
        <symbol id="k-fil" viewBox="0 0 24 24"><path d="M2 2h10q9 2 9 9v11" fill="none" stroke="#a08c84" stroke-width="1.200"/><path d="M14 2h7v8" fill="none" stroke="#b0b0b0"/></symbol>
        <symbol id="k-cha" viewBox="0 0 24 24"><path d="M2 2h9l10 10v10" fill="none" stroke="#a08c84" stroke-width="1.200"/><path d="M12 2h9v9" fill="none" stroke="#b0b0b0"/></symbol>
        <symbol id="k-rect" viewBox="0 0 24 24"><path d="M2 5h20v14H2z" fill="none" stroke="#101010" stroke-width="1.500"/><circle cx="2" cy="5" r="2" fill="#e01010"/><circle cx="22" cy="19" r="2" fill="#e01010"/></symbol>
        <symbol id="k-spl" viewBox="0 0 24 24"><path d="M3 14l4-4V3M7 10l8 4v7M15 14l7-4" fill="none" stroke="#404040"/><g fill="#888"><circle cx="3" cy="14" r="2"/><circle cx="7" cy="3" r="2"/><circle cx="22" cy="10" r="2"/><circle cx="15" cy="21" r="2"/></g><circle cx="7" cy="10" r="2" fill="#e01010"/><circle cx="15" cy="14" r="2" fill="#e01010"/></symbol>
        <symbol id="k-pt" viewBox="0 0 24 24"><path d="M12 3v18M3 12h18" stroke="#101010" stroke-width="1.500"/></symbol>
        <symbol id="k-off" viewBox="0 0 24 24"><path d="M2 21V7l6-5h6v6q9 1 9 8-2 5-8 5z" fill="none" stroke="#909090" stroke-width="1.500"/><path d="M5 18V9l4-3h2v5q8 1 8 5-1 2-4 2z" fill="none" stroke="#a88c8c"/></symbol>
        <symbol id="k-trim" viewBox="0 0 24 24"><path d="M2 13h20M6 2l9 20" stroke="#908890" stroke-width="1.300"/><path d="M15 11l4-6 4 2-4 7z" fill="#90887c"/></symbol>
        <symbol id="k-ext" viewBox="0 0 24 24"><path d="M2 13h11M5 2l9 20" stroke="#908890" stroke-width="1.300"/><path d="M12 13l8-10 3 2-8 10z" fill="#90887c"/></symbol>
        <symbol id="k-dim" viewBox="0 0 24 24"><path d="M1 8v12M23 8v12M1 14h22M1 14l4-3v6zM23 14l-4-3v6z" fill="#888" stroke="#888"/><path d="M16 1l5 2-9 12-4 4 3-6-2-1z" fill="#8c8878"/></symbol>
        <symbol id="k-con" viewBox="0 0 24 24"><path d="M2 14L10 4M6 15l8-10M11 18h12M17 9v9" stroke="#98909c" stroke-width="1.500"/></symbol>
        <symbol id="k-auto" viewBox="0 0 24 24"><path d="M1 22L10 7h13" fill="none" stroke="#908c90" stroke-width="1.500"/><circle cx="10" cy="7" r="2.500" fill="#988ca0"/></symbol>
        <symbol id="k-tan" viewBox="0 0 24 24"><circle cx="14" cy="16" r="6" fill="none" stroke="#98909c" stroke-width="1.500"/><path d="M2 14L21 4M6 5l10 14" stroke="#98909c" stroke-width="1.500"/></symbol>
        <symbol id="k-show" viewBox="0 0 24 24"><path d="M0 7l7 5-7 5z" fill="#748c74"/><path d="M11 11l6-9M15 12l7-9M11 22h12M17 14v8" stroke="#98909c" stroke-width="1.500"/></symbol>
    </svg>

    <div class="window">
        <header class="titlebar">
            <svg class="i18"><use href="#nx"/></svg>
            <h1>NX 8.5 - 建模 - [zhuangpeitu_UG7.5.prt（修改的 ）]</h1>
            <span class="brand">SIEMENS</span>
            <button class="win" aria-label="最小化"><svg viewBox="0 0 18 18"><path d="M4 11h7v3H4z" fill="#fff"/></svg></button>
            <button class="win" aria-label="最大化"><svg viewBox="0 0 18 18"><path d="M4 5h10v9H4z" fill="none" stroke="#fff" stroke-width="2"/></svg></button>
            <button class="win close" aria-label="关闭"><svg viewBox="0 0 18 18"><path d="M4 4l10 10M14 4L4 14" stroke="#fff" stroke-width="2"/></svg></button>
        </header>

        <nav class="menu">
            <i class="grip"></i>
            <svg class="i16"><use href="#block-l"/></svg>
            <a href="#">文件<b>(<u>F</u>)</b></a>
            <a href="#">编辑<b>(<u>E</u>)</b></a>
            <a href="#">视图<b>(<u>V</u>)</b></a>
            <a href="#">插入<b>(<u>S</u>)</b></a>
            <a href="#">格式<b>(<u>R</u>)</b></a>
            <a href="#">工具<b>(<u>T</u>)</b></a>
            <a href="#">装配<b>(<u>A</u>)</b></a>
            <a href="#">信息<b>(<u>I</u>)</b></a>
            <a href="#">分析<b>(<u>L</u>)</b></a>
            <a href="#">首选项<b>(<u>P</u>)</b></a>
            <a href="#">窗口<b>(<u>O</u>)</b></a>
            <a href="#"><span class="gc">GC</span>工具箱</a>
            <a href="#">帮助<b>(<u>H</u>)</b></a>
            <div class="mdi">
                <button aria-label="最小化"><svg viewBox="0 0 16 16"><path d="M4 10h7v2H4z" fill="#444"/></svg></button>
                <button aria-label="还原"><svg viewBox="0 0 16 16"><path d="M6 6V4h7v5h-2M4 7h7v5H4zM4 8h7" fill="none" stroke="#444" stroke-width="1.500"/></svg></button>
                <button aria-label="关闭"><svg viewBox="0 0 16 16"><path d="M4 4l8 8M12 4l-8 8" stroke="#444" stroke-width="2.500"/></svg></button>
            </div>
        </nav>

        <div class="row row-std">
            <div class="bar">
                <i class="grip"></i>
                <button class="txt"><svg><use href="#nx"/></svg>开始<i class="tri"></i></button>
                <button class="ic"><svg><use href="#new"/></svg></button>
                <button class="ic"><svg><use href="#open"/></svg></button>
                <button class="ic"><svg><use href="#save"/></svg></button>
                <i class="sep"></i>
                <button class="ic"><svg><use href="#cut"/></svg></button>
                <button class="ic"><svg><use href="#copy"/></svg></button>
                <button class="ic"><svg><use href="#paste"/></svg></button>
                <button class="ic"><svg><use href="#del"/></svg></button>
                <i class="sep"></i>
                <button class="ic"><svg><use href="#undo"/></svg></button>
                <button class="ic"><svg><use href="#redo"/></svg></button>
                <i class="sep"></i>
                <button class="txt"><svg><use href="#find"/></svg>命令查找器</button>
                <button class="ic"><svg><use href="#laptop"/></svg></button><button class="drop"></button>
                <button class="drop end"></button>
            </div>
            <div class="bar">
                <i class="grip"></i>
                <button class="ic"><svg><use href="#fit"/></svg></button><button class="drop"></button>
                <button class="ic"><svg><use href="#laptop"/></svg></button><button class="drop"></button>
                <button class="ic"><svg><use href="#cube-b"/></svg></button><button class="drop"></button>
                <button class="ic"><svg><use href="#rect"/></svg></button><button class="drop"></button>
                <i class="sep"></i>
                <button class="ic"><svg><use href="#book-a"/></svg></button>
                <button class="ic"><svg><use href="#book-b"/></svg></button>
                <button class="drop end"></button>
            </div>
            <div class="bar">
                <i class="grip"></i>
                <button class="ic"><svg><use href="#palette"/></svg></button>
                <i class="sep"></i>
                <button class="ic"><svg><use href="#showhide"/></svg></button><button class="drop"></button>
                <i class="sep"></i>
                <button class="ic"><svg><use href="#measure"/></svg></button><button class="drop"></button>
                <button class="ic"><svg><use href="#ruler"/></svg></button>
                <button class="drop end"></button>
            </div>
        </div>

        <div class="row row-feature">
            <div class="bar">
                <i class="grip"></i>
                <button class="big"><svg><use href="#plane"/></svg>基准平面</button><button class="drop"></button>
                <button class="big"><svg><use href="#extrude"/></svg>拉伸</button><button class="drop"></button>
                <button class="big"><svg><use href="#hole"/></svg>孔</button>
                <button class="big"><svg><use href="#thread"/></svg>螺纹</button>
                <i class="sep"></i>
                <button class="big"><svg><use href="#pattern"/></svg>阵列特征</button><button class="drop"></button>
                <button class="big"><svg><use href="#unite"/></svg>求和</button><button class="drop"></button>
                <button class="big"><svg><use href="#trim"/></svg>修剪体</button><button class="drop"></button>
                <button class="big"><svg><use href="#shell"/></svg>抽壳</button>
                <button class="more">»</button>
            </div>
            <div class="bar">
                <i class="grip"></i>
                <button class="big"><svg><use href="#offset"/></svg>偏置区域</button><button class="drop"></button>
                <button class="big"><svg><use href="#delface"/></svg>删除面</button>
                <button class="drop end"></button>
            </div>
            <div class="bar">
                <i class="grip"></i>
                <button class="ic"><svg><use href="#pchk"/></svg></button>
                <button class="ic"><svg><use href="#ptree"/></svg></button>
                <button class="ic"><svg><use href="#pgrid"/></svg></button>
                <button class="ic"><svg><use href="#csys"/></svg></button>
                <button class="drop end"></button>
            </div>
            <div class="bar wide">
                <i class="grip"></i>
                <button class="big"><svg><use href="#ball"/></svg>真实着色</button>
                <button class="big" disabled><svg><use href="#metal"/></svg>光亮金属刷色</button><button class="drop"></button>
                <button class="big" disabled><svg><use href="#plastic"/></svg>红色高泽塑料</button><button class="drop"></button>
                <button class="big" disabled><svg><use href="#gray-a"/></svg>无全局反射图</button><button class="drop"></button>
                <button class="big" disabled><svg><use href="#gray-b"/></svg>渐变深灰色背景</button><button class="drop"></button>
                <button class="big on"><svg><use href="#lamp"/></svg>显示阴影</button>
                <button class="big" disabled><svg><use href="#floor-a"/></svg>显示地板反射</button>
                <button class="big" disabled><svg><use href="#floor-b"/></svg>显示地板栅格</button>
                <button class="more">»</button>
            </div>
        </div>

        <div class="row row-tools">
            <div class="bar">
                <i class="grip"></i>
                <button class="ic"><svg><use href="#layerset"/></svg></button>
                <button class="ic"><svg><use href="#layers"/></svg></button>
                <button class="ic"><svg><use href="#layerlist"/></svg></button>
                <i class="sep"></i>
                <button class="ic"><svg><use href="#tag"/></svg></button>
                <i class="sep"></i>
                <button class="ic"><svg><use href="#chk-a"/></svg></button>
                <button class="ic"><svg><use href="#chk-b"/></svg></button>
                <button class="ic"><svg><use href="#chk-c"/></svg></button>
                <i class="sep"></i>
                <button class="ic"><svg viewBox="0 0 24 24"><use href="#cube-y" width="14" height="14"/><path d="M22 4l-7 9" stroke="#b86010" stroke-width="3"/><path d="M1 15h15v8H1z" fill="#fff" stroke="#201870"/><text x="2" y="22" class="abc">ABC</text><path d="M18 13l6 5-6 6z" fill="#a01090"/></svg></button>
                <button class="drop end"></button>
            </div>
            <div class="bar">
                <i class="grip"></i>
                <button class="ic"><svg><use href="#strip-a"/></svg></button>
                <button class="ic"><svg><use href="#strip-b"/></svg></button>
                <button class="ic"><svg><use href="#hand"/></svg></button>
                <button class="drop end"></button>
            </div>
            <div class="bar">
                <i class="grip"></i>
                <button class="ic"><svg><use href="#spring-a"/></svg></button>
                <button class="ic"><svg><use href="#spring-b"/></svg></button>
                <button class="ic"><svg><use href="#spring-c"/></svg></button>
                <i class="sep"></i>
                <button class="ic"><svg><use href="#spring-x"/></svg></button>
                <button class="drop end"></button>
            </div>
            <div class="bar gap-l">
                <i class="grip"></i>
                <button class="ic"><svg><use href="#tri"/></svg></button>
                <button class="ic"><svg><use href="#grid-t"/></svg></button>
                <button class="ic"><svg><use href="#fold-a"/></svg></button>
                <button class="ic"><svg><use href="#fold-b"/></svg></button>
                <button class="drop end"></button>
            </div>
            <div class="bar gap-s">
                <i class="grip"></i>
                <button class="ic"><svg><use href="#lock-a"/></svg></button>
                <button class="ic"><svg><use href="#lock-b"/></svg></button>
                <button class="drop end"></button>
            </div>
        </div>

        <div class="row row-select">
            <span class="pick"><select aria-label="类型过滤器"><option>没有选择过滤器</option></select></span>
            <span class="pick"><select aria-label="选择范围"><option>整个装配</option></select></span>
            <button class="sm"><svg><use href="#s-gear"/></svg></button>
            <i class="sep"></i>
            <button class="sm"><svg><use href="#s-filter"/></svg></button>
            <button class="sm"><svg><use href="#s-target"/></svg></button>
            <button class="sm"><svg><use href="#s-find"/></svg></button>
            <i class="sep"></i>
            <button class="sm"><svg><use href="#s-cube"/></svg></button>
            <button class="sm"><svg><use href="#s-cube2"/></svg></button>
            <i class="sep"></i>
            <button class="sm on"><svg><use href="#s-end"/></svg></button>
            <button class="sm on"><svg><use href="#s-mid"/></svg></button>
            <button class="sm"><svg><use href="#s-ctl"/></svg></button>
            <button class="sm"><svg><use href="#s-int"/></svg></button>
            <button class="sm on"><svg><use href="#s-cen"/></svg></button>
            <button class="sm"><svg><use href="#s-quad"/></svg></button>
            <button class="sm on"><svg><use href="#s-pt"/></svg></button>
            <button class="sm on"><svg><use href="#s-on"/></svg></button>
            <button class="sm"><svg><use href="#s-face"/></svg></button>
            <i class="sep"></i>
            <button class="sm"><svg><use href="#s-mesh"/></svg></button>
            <button class="drop end last"></button>
        </div>

        <div class="status">
            <span class="cue"></span>
            <span class="msg">体<b>(0)</b> 已选定</span>
            <span class="cell c1"></span>
            <span class="cell c2"></span>
            <span class="cell c3">
                <svg class="i16" viewBox="0 0 16 16"><path d="M0 0h16v16H0z" fill="#788488"/><path d="M3 4l4 2 3-3 3 2-2 6-5 2-3-4z" fill="#706c70"/></svg>
                <svg class="i16" viewBox="0 0 16 16"><path d="M1 4V1h3M12 1h3v3M15 12v3h-3M4 15H1v-3" fill="none" stroke="#303438"/><path d="M3 4h10v8H3z" fill="#fff" stroke="#303438"/><path d="M5 6h6v4H5z" fill="#2878e0"/></svg>
            </span>
        </div>

        <main class="work">
            <nav class="tabs">
                <button><svg><use href="#t-asm"/></svg></button>
                <button><svg><use href="#t-con"/></svg></button>
                <button class="active"><svg><use href="#t-part"/></svg></button>
                <button><svg><use href="#t-books"/></svg></button>
                <button class="apart"><svg><use href="#t-info"/></svg></button>
                <button class="apart"><svg><use href="#t-web"/></svg></button>
                <button class="apart"><svg><use href="#t-clock"/></svg></button>
                <button><svg><use href="#t-pal"/></svg></button>
                <button><svg><use href="#t-rain"/></svg></button>
                <button><svg><use href="#t-cad"/></svg></button>
                <button><svg><use href="#t-ppl"/></svg></button>
                <button><svg><use href="#t-pic"/></svg></button>
            </nav>

            <section class="panel">
                <h2><svg viewBox="0 0 12 12"><path d="M4 3l4-2 3 2v4L8 9 5 8z" fill="#d8c850" stroke="#000"/><path d="M1 10l4-3" stroke="#000" stroke-width="2"/><circle cx="5" cy="6" r="2.500" fill="#fff" stroke="#000"/></svg>部件导航器</h2>
                <div class="tree">
                    <div class="tree-view">
                        <table>
                            <thead>
                                <tr><th>名称<i class="sort"></i></th><th>附注</th></tr>
                            </thead>
                            <tbody id="nodes">
                                <tr class="root">
                                    <td><div class="node"><button class="fold" aria-label="折叠">−</button><svg viewBox="0 0 16 16"><path d="M1 13V3h5l1 2h6v3" fill="#f8d860" stroke="#604808"/><path d="M1 13l3-6h12l-3 6z" fill="#f8b828" stroke="#604808"/></svg><span>模型历史记录</span></div></td>
                                    <td></td>
                                </tr>
                            </tbody>
                        </table>
                    </div>
                    <div class="vscroll"><i class="up"></i><i class="thumb"></i><i class="down"></i></div>
                    <div class="hscroll"><i class="left"></i><i class="thumb"></i><i class="right"></i></div>
                </div>
                <div class="splitter"><i></i></div>
            </section>

            <section class="view">
                <svg class="model" viewBox="335 235 1150 722" preserveAspectRatio="xMidYMid slice">
                    <defs>
                        <pattern id="coil" x="706" y="700" width="48" height="8" patternUnits="userSpaceOnUse">
                            <path d="M0 0h48v8H0z" fill="#2828c8"/>
                            <g fill="none">
                                <path id="c" d="M0 -3Q24 9 48 -5" stroke="#000" stroke-width="2"/>
                                <use href="#c" y="8"/><use href="#c" y="-8"/><use href="#c" y="16"/>
                                <path id="d" d="M0 1Q20 10 48 -1" stroke="#4848ff" stroke-width="2"/>
                                <use href="#d" y="8"/><use href="#d" y="-8"/>
                            </g>
                        </pattern>
                        <linearGradient id="cone"><stop offset="0" stop-color="#e87838"/><stop offset=".4" stop-color="#ffb880"/><stop offset="1" stop-color="#d06830"/></linearGradient>
                    </defs>

                    <!-- base plate -->
                    <path d="M643 827l207 95v25l-207-95z" fill="#b4b4b4"/>
                    <path d="M850 922l327-100v25L850 947z" fill="#d4d6d4"/>
                    <path d="M643 827l15-5 177 93 327-100 15 7-327 100z" fill="#fff"/>

                    <!-- ejector space -->
                    <path d="M692 690l110 50v150l-110-50z" fill="#d4d4d4"/>
                    <path d="M693 806l90-28 18-4v79z" fill="#b8ffff"/>
                    <path d="M693 806l90-28" stroke="#000"/>
                    <path d="M706 698l48 22v90q-8 4-18-2-14 1-30-1z" fill="url(#coil)"/>
                    <path d="M782 732l19 9v102q-12 1-19-6z" fill="url(#coil)"/>
                    <path d="M724 809h14" stroke="#b8a818" stroke-width="2"/>
                    <g stroke="#000" stroke-width="1.500">
                        <path d="M693 806l107 47v19l-107-48z" fill="#68b0b4"/>
                        <path d="M693 824l107 48v22l-107-49z" fill="#7c8098"/>
                        <path d="M693 846l108 49v4l-109-50z" fill="#fff" stroke-width="1"/>
                        <path d="M790 851l10-3v6z"/>
                    </g>

                    <!-- spacer blocks -->
                    <path d="M657 677l35 16v154l-35-15z" fill="#b8b8b8"/>
                    <path d="M801 742l34 16v157l-34-17z" fill="#b8b8b8"/>
                    <path d="M835 758l327-99v156L835 915z" fill="#d2d4d2"/>
                    <path d="M692 693v154M801 742v156M643 827l207 95v25M850 922l327-100M835 915l327-100" fill="none" stroke="#000" stroke-width="1.500"/>
                    <path d="M840 917l12-4 10 3-8 4-5 2z"/>

                    <!-- plates -->
                    <path d="M658 637l177 82v39l-177-81z" fill="#986c70"/>
                    <path d="M835 719l327-100v40L835 758z" fill="#ac7c7e"/>
                    <path d="M658 568l177 81v70l-177-82z" fill="#bc9c20"/>
                    <path d="M835 649l327-99v69L835 719z" fill="#d4b028"/>
                    <path d="M658 416l177 81v152l-177-81z" fill="#187478"/>
                    <path d="M835 497l327-100v153L835 649z" fill="#188488"/>
                    <path d="M658 385l177 80v32l-177-81z" fill="#b09484"/>
                    <path d="M835 465l327-90v22L835 497z" fill="#ccac98"/>
                    <path d="M658 416l177 81 327-100M658 568l177 81 327-99M658 637l177 82 327-100M658 677l177 81 327-99" fill="none" stroke="#000" stroke-width="1.500"/>
                    <path d="M835 470v445" stroke="#000" stroke-width="2"/>
                    <path d="M656 562l-13 5 192 88 342-105-14-7" fill="none" stroke="#dca0a0" stroke-width="2"/>

                    <!-- top clamping plate -->
                    <path d="M970 243l207 96-327 99-207-95z" fill="#fff"/>
                    <path d="M643 343l207 95v39l-207-95z" fill="#b4b4b4"/>
                    <path d="M850 438l327-99v38L850 477z" fill="#d2d4d2"/>
                    <path d="M643 343l207 95 327-99M850 438v39M643 382l207 95 327-100" fill="none" stroke="#000" stroke-width="1.500"/>
                    <g fill="#8080f8" stroke="#000" stroke-width="1.500">
                        <ellipse cx="980" cy="266" rx="16" ry="6"/>
                        <ellipse cx="1119" cy="330" rx="16" ry="6"/>
                        <ellipse cx="701" cy="351" rx="16" ry="6"/>
                        <ellipse cx="841" cy="415" rx="16" ry="6"/>
                    </g>
                    <g fill="#f8f000" stroke="#000" stroke-width="1.500">
                        <ellipse cx="1052" cy="297" rx="11" ry="4"/><ellipse cx="1052" cy="298" rx="5" ry="2"/><path d="M1052 296v4"/>
                        <ellipse cx="768" cy="384" rx="11" ry="4"/><ellipse cx="768" cy="385" rx="5" ry="2"/><path d="M768 383v4"/>
                    </g>
                    <ellipse cx="859" cy="356" rx="4" ry="2" fill="#fff" stroke="#000"/>
                    <ellipse cx="963" cy="325" rx="3" ry="2" fill="#fff" stroke="#000"/>
                    <path d="M854 332v9a56 21 0 0 0 112 0v-9z" fill="#a84c28" stroke="#000"/>
                    <ellipse cx="910" cy="332" rx="56" ry="21" fill="#ff8040" stroke="#000" stroke-width="2"/>
                    <ellipse cx="910" cy="332" rx="26" ry="10" fill="url(#cone)" stroke="#000"/>
                    <path d="M895 340q15-9 30 0-15 5-30 0z" fill="#90b838" stroke="#000"/>
                    <ellipse cx="910" cy="340" rx="6" ry="2" fill="none" stroke="#000"/>
                    <ellipse cx="885" cy="320" rx="5" ry="3"/><ellipse cx="935" cy="343" rx="5" ry="3"/>

                    <!-- cooling holes -->
                    <g fill="#6c7474" stroke="#000" stroke-width="1.500">
                        <ellipse cx="711" cy="483" rx="4" ry="6"/><ellipse cx="782" cy="516" rx="4" ry="6"/>
                        <ellipse cx="711" cy="527" rx="4" ry="6"/><ellipse cx="782" cy="560" rx="4" ry="6"/>
                        <ellipse cx="711" cy="570" rx="4" ry="6"/><ellipse cx="782" cy="603" rx="4" ry="6"/>
                    </g>

                    <!-- work coordinate system -->
                    <path d="M910 506l3 20-2 28h-2l-2-28z" fill="#6878d0"/>
                    <path d="M913 557q15-9 34-9-15 5-34 9z" fill="#a8f0b0"/>
                    <path d="M913 560l22 6 10 9-14-5z" fill="#f09090"/>
                    <text x="914" y="504" class="axis" fill="#1050f0">ZC</text>
                    <text x="940" y="541" class="axis" fill="#208828">YC</text>
                    <text x="929" y="587" class="axis" fill="#e02828">XC</text>
                    <g fill="none" stroke="#ffa040">
                        <ellipse cx="961" cy="439" rx="27" ry="10" stroke-width="4"/>
                        <ellipse cx="961" cy="531" rx="39" ry="12" stroke-width="6"/>
                        <ellipse cx="961" cy="542" rx="41" ry="15" stroke-width="6"/>
                    </g>

                    <!-- view triad -->
                    <path d="M395 874l17-6 16 7v21l-16 6-17-7z" fill="#a8a8a8"/>
                    <path d="M395 874l17 5 16-4M412 879v23" fill="none" stroke="#c4c4c4"/>
                    <path d="M394 894V870" stroke="#1040e0" stroke-width="3"/><path d="M391 871l3-11 3 11z" fill="#1040e0"/>
                    <path d="M397 895l31-10 4-5M428 884l-2-4" stroke="#40a850" fill="none"/>
                    <path d="M394 896l18 7" stroke="#d02020" stroke-width="3"/><path d="M410 900l10 7-10-1z" fill="#d02020"/>
                    <circle cx="393" cy="896" r="4" fill="#e8e8e8"/>
                    <text x="390" y="859" class="axis" fill="#1848ff">Z</text>
                    <text x="418" y="914" class="axis" fill="#e02020">X</text>
                </svg>

                <div class="ime">
                    <div class="avatar"><svg viewBox="0 0 36 36"><path d="M9 32q-5-5 1-9-4-3-2-8 0-12 10-12t10 12q2 5-2 8 6 4 1 9-9 4-18 0z" fill="#d8dce4" stroke="#b4bac4"/><path d="M9 17q9 7 18 0M12 14q6-5 12 0" fill="none" stroke="#a8b0bc" stroke-width="2"/><circle cx="15" cy="9" r="2" fill="#a8b0bc"/><circle cx="21" cy="9" r="2" fill="#a8b0bc"/></svg></div>
                    <div class="keys">
                        <button>中</button>
                        <button><svg viewBox="0 0 14 14"><path d="M8 1q6 5 2 10-5 4-9 0 9 0 7-10z" fill="#2080f0"/></svg></button>
                        <button><svg viewBox="0 0 14 14"><circle cx="4" cy="7" r="1.500" fill="none" stroke="#2080f0"/><path d="M9 5h3q1 3-2 5v-2H9z" fill="#2080f0"/></svg></button>
                        <button><svg viewBox="0 0 14 14"><path d="M2 12l6-6" stroke="#2080f0" stroke-width="3"/><path d="M7 6q0-5 5-5L9 4l2 1 2-2q1 5-4 5z" fill="#2080f0"/></svg></button>
                        <button><svg viewBox="0 0 14 14"><path d="M2 12V2h8v2M4 1h4" fill="none" stroke="#2080f0" stroke-width="2"/><path d="M5 6h4l3 3v4H5zM7 9h3M7 11h3" fill="#fff" stroke="#2080f0"/></svg></button>
                        <button><svg viewBox="0 0 14 14"><circle cx="7" cy="7" r="6" fill="none" stroke="#2080f0" stroke-width="1.500"/><circle cx="5" cy="5" r="1" fill="#2080f0"/><circle cx="9" cy="5" r="1" fill="#2080f0"/><path d="M4 8q3 4 6 0" fill="none" stroke="#2080f0"/></svg></button>
                    </div>
                </div>
            </section>
        </main>

        <div class="row row-asm">
            <div class="bar">
                <i class="grip"></i>
                <button class="ic"><svg><use href="#b-gray"/></svg></button>
                <button class="ic"><svg><use href="#b-add"/></svg></button>
                <button class="ic"><svg><use href="#b-move"/></svg></button>
                <button class="ic"><svg><use href="#t-con"/></svg></button>
                <i class="sep"></i>
                <button class="ic"><svg><use href="#b-three"/></svg></button>
                <button class="drop end"></button>
            </div>
        </div>
        <div class="row row-sketch">
            <div class="bar">
                <i class="grip"></i>
                <button class="ic"><svg><use href="#k-sketch"/></svg></button>
                <button class="txt" disabled><svg><use href="#k-fin"/></svg>完成草图</button>
                <button class="ic"><svg><use href="#k-prof"/></svg></button>
                <button class="ic"><svg><use href="#k-line"/></svg></button>
                <button class="ic"><svg><use href="#k-arc"/></svg></button>
                <button class="ic"><svg><use href="#k-cir"/></svg></button>
                <button class="ic"><svg><use href="#k-fil"/></svg></button>
                <button class="ic"><svg><use href="#k-cha"/></svg></button>
                <button class="ic"><svg><use href="#k-rect"/></svg></button>
                <button class="ic"><svg><use href="#k-spl"/></svg></button>
                <button class="ic"><svg><use href="#k-pt"/></svg></button>
                <button class="ic"><svg><use href="#k-off"/></svg></button><button class="drop"></button>
                <i class="sep"></i>
                <button class="ic"><svg><use href="#k-trim"/></svg></button>
                <button class="ic"><svg><use href="#k-ext"/></svg></button>
                <i class="sep"></i>
                <button class="ic"><svg><use href="#k-dim"/></svg></button><button class="drop"></button>
                <i class="sep"></i>
                <button class="ic"><svg><use href="#k-con"/></svg></button>
                <button class="ic"><svg><use href="#k-auto"/></svg></button><button class="drop"></button>
                <button class="ic"><svg><use href="#k-tan"/></svg></button>
                <button class="ic"><svg><use href="#k-show"/></svg></button><button class="drop"></button>
                <button class="drop end"></button>
            </div>
        </div>
    </div>

    <script>
        // feature history: [name, icon, how many in a row]
        const history = [
            ['体', 'n-body', 6], ['块', 'cube-b', 3], ['求差', 'subtract', 2], ['圆柱', 'n-cyl', 2],
            ['求和', 'unite', 1], ['圆柱', 'n-cyl', 3], ['求和', 'unite', 1], ['求差', 'subtract', 1],
            ['边倒圆', 'n-blend', 2], ['体', 'n-body', 6], ['圆柱', 'n-cyl', 2], ['圆锥', 'n-cone', 1],
            ['求和', 'unite', 1]
        ];
        const nodes = document.getElementById('nodes');
        let n = 0;

        history.forEach(([name, icon, count]) => {
            for (let k = 0; k < count; k++) {
                const row = nodes.insertRow();
                if (n === 0) row.className = 'selected';
                row.innerHTML = `<td><label class="node"><i class="branch"></i><input type="checkbox" checked><svg><use href="#${icon}"/></svg><span>${name}<b>(${n})</b></span></label></td><td></td>`;
                n++;
            }
        });
    </script>
</body>
</html>
```

FILE: styles.css
```css
* {
    box-sizing: border-box;
}

body {
    margin: 0;
    background: #000;
    color: #000;
    font: 12px/16px "Liberation Sans", "Noto Sans CJK SC", sans-serif;
}

.sprite {
    position: absolute;
}

button {
    flex: none;
    margin: 0;
    padding: 0;
    border: 0;
    background: none;
    color: inherit;
    font: inherit;
}

svg {
    display: block;
    flex: none;
}

.window {
    display: flex;
    flex-direction: column;
    height: 100vh;
    padding: 0 4px 8px;
    background: #161616;
    overflow: hidden;
}

/* title bar */
.titlebar {
    display: flex;
    align-items: center;
    flex: none;
    height: 30px;
    margin: 0 -4px;
    padding: 0 5px 2px;
    background: linear-gradient(#000 0 1px, #707074 1px, #505054 9px, #1c1c1c 10px, #101010);
    color: #fff;
}

.titlebar h1 {
    flex: 1;
    margin: 0 0 0 4px;
    font: 13px/16px "Open Sans", "Noto Sans CJK SC", sans-serif;
}

.brand {
    margin-right: 24px;
    font: 800 13px/16px "Open Sans", sans-serif;
}

.win {
    width: 18px;
    height: 18px;
    margin-left: 4px;
    border: 1px solid #808080;
    border-radius: 3px;
    background: linear-gradient(#707070, #303030);
}

.win.close {
    border-color: #f0a090;
    background: linear-gradient(#f08068, #d83010);
}

.i18 {
    width: 18px;
    height: 18px;
}

.i16 {
    width: 16px;
    height: 16px;
}

/* menu */
.menu {
    display: flex;
    align-items: center;
    flex: none;
    gap: 12px;
    height: 24px;
    padding: 0 6px 0 4px;
    border-bottom: 1px solid #b8b8bc;
    background: #e9e9eb;
    white-space: nowrap;
}

.menu .grip {
    margin-right: -11px;
}

.menu .i16 {
    margin-right: -7px;
}

.menu a {
    color: #000;
    text-decoration: none;
}

.menu b {
    margin-left: 4px;
    font: 12px/16px "Liberation Serif", serif;
}

.gc {
    margin-right: 6px;
    font: 10px/16px "Liberation Mono", monospace;
}

.mdi {
    display: flex;
    gap: 3px;
    margin-left: auto;
}

.mdi button {
    width: 16px;
    height: 16px;
    border: 1px solid #808084;
    border-radius: 3px;
    background: #f8f8fa;
}

/* toolbars */
.row {
    display: flex;
    flex: none;
    height: 34px;
    background: #e0e0e2;
}

.row-feature {
    height: 62px;
    background: linear-gradient(#dcdcde, #cfd2d1);
}

.row-tools {
    height: 35px;
    border-bottom: 2px solid #a09ca0;
    background: #ced1d0;
}

.row-std {
    background: linear-gradient(#e4e4e6, #dedee0);
}

.row-asm {
    background: linear-gradient(#ececee, #dededf);
}

.row-sketch {
    padding-left: 151px;
    background: linear-gradient(#dadadb, #cdd0cf);
}

.bar {
    display: flex;
    align-items: center;
    flex: none;
    padding: 0 1px 0 4px;
    border-top: 1px solid #f8f8f8;
    border-right: 1px solid #b0b0b4;
    border-bottom: 1px solid #bcbcc0;
    box-shadow: inset 1px 0 #f0f0f0;
}

.wide {
    flex: 1;
    border-right: 0;
}

.gap-l {
    margin-left: 93px;
}

.gap-s {
    margin-left: 31px;
}

.grip {
    flex: none;
    align-self: stretch;
    width: 3px;
    margin: 4px 1px 4px 0;
    background: repeating-linear-gradient(#98989c 0 2px, transparent 2px 4px);
}

.sep {
    flex: none;
    align-self: stretch;
    width: 6px;
    margin: 2px 0;
    background: linear-gradient(90deg, transparent 2px, #b4b4b8 2px 3px, #fff 3px 4px, transparent 4px);
}

.ic {
    display: flex;
    justify-content: center;
    width: 31px;
}

.ic svg,
.big svg {
    width: 24px;
    height: 24px;
}

.txt {
    display: flex;
    align-items: center;
    gap: 3px;
    padding: 0 3px;
}

.txt svg {
    width: 24px;
    height: 24px;
}

.txt:disabled,
.big:disabled {
    color: #98989a;
}

.abc {
    font: bold 7px "Liberation Sans", sans-serif;
}

.tri,
.drop::after {
    display: block;
    width: 5px;
    height: 3px;
    background: #000;
    clip-path: polygon(0 0, 100% 0, 50% 100%);
    content: "";
}

.drop {
    display: flex;
    align-items: center;
    justify-content: center;
    width: 12px;
    height: 24px;
}

.drop.end {
    align-self: flex-end;
    align-items: flex-end;
    padding-bottom: 6px;
}

.big {
    display: flex;
    flex-direction: column;
    align-items: center;
    align-self: stretch;
    width: 60px;
    margin: 1px 0;
    padding: 3px 5px 0;
    border: 1px solid transparent;
    border-radius: 3px;
    line-height: 12px;
    text-align: center;
}

.big svg {
    margin-bottom: 3px;
}

.on {
    border: 1px solid #606068;
    border-radius: 3px;
    background: #fff;
}

.more {
    position: relative;
    align-self: stretch;
    width: 14px;
    margin-left: auto;
    padding-bottom: 46px;
    font: bold 16px/12px "Liberation Sans", sans-serif;
}

.row-feature .more {
    margin-left: 30px;
}

.row-feature .wide .more {
    margin-left: auto;
}

.more::after {
    position: absolute;
    right: 5px;
    bottom: 7px;
    width: 5px;
    height: 3px;
    background: #000;
    clip-path: polygon(0 0, 100% 0, 50% 100%);
    content: "";
}

/* selection bar */
.row-select {
    align-items: center;
    height: 26px;
    padding-left: 5px;
    border-bottom: 1px solid #b8b8bc;
    background: linear-gradient(#cfd1d0, #dcdcde);
}

.pick {
    position: relative;
    width: 110px;
    margin-right: 8px;
}

.pick + .pick {
    width: 116px;
    margin-right: 5px;
}

.pick select {
    display: block;
    width: 100%;
    height: 17px;
    padding: 0 0 0 1px;
    border: 1px solid #707078;
    border-radius: 2px;
    appearance: none;
    background: #fff;
    color: #000;
    font: 12px/15px "Noto Sans CJK SC", sans-serif;
}

.pick::after {
    position: absolute;
    top: 1px;
    right: 1px;
    width: 16px;
    height: 15px;
    background: linear-gradient(#c8e4ff, #3c8ce8);
    content: "";
    pointer-events: none;
}

.pick::before {
    position: absolute;
    z-index: 1;
    top: 6px;
    right: 4px;
    width: 10px;
    height: 6px;
    background: #000;
    clip-path: polygon(0 0, 100% 0, 50% 100%);
    content: "";
    pointer-events: none;
}

.sm {
    display: flex;
    align-items: center;
    justify-content: center;
    width: 23px;
    height: 22px;
}

.sm svg {
    width: 16px;
    height: 16px;
}

.last {
    margin-right: 3px;
    margin-left: auto;
}

/* status line */
.status {
    display: flex;
    align-items: center;
    flex: none;
    height: 24px;
    border-top: 1px solid #f4f4f4;
    background: linear-gradient(#dedee0, #d2d4d4);
    font-weight: bold;
}

.cue {
    align-self: stretch;
    width: 691px;
    border-right: 1px solid #f4f4f4;
}

.msg {
    flex: 1;
    padding-left: 3px;
}

.msg b {
    margin: 0 7px 0 3px;
}

.cell {
    align-self: stretch;
    width: 20px;
    border-left: 1px solid #f8f8f8;
    box-shadow: -1px 0 #b8b8bc;
}

.c2 {
    width: 36px;
}

.c3 {
    display: flex;
    align-items: center;
    gap: 5px;
    width: 44px;
    padding-left: 3px;
}

/* work area */
.work {
    display: flex;
    flex: 1;
    min-height: 0;
}

.tabs {
    display: flex;
    flex-direction: column;
    align-items: flex-end;
    flex: none;
    gap: 2px;
    width: 33px;
    padding-top: 16px;
    background: linear-gradient(90deg, #8c8c8e, #b0b0b2 8px, #b8b8ba);
}

.tabs button {
    width: 27px;
    height: 40px;
    padding-left: 1px;
    border: 1px solid #68686c;
    border-right-color: #808084;
    border-radius: 4px 0 0 4px;
    background: linear-gradient(#e0e0e2, #ccccd0);
}

.tabs .active {
    width: 29px;
    border-right: 0;
    background: #ececee;
}

.tabs .apart {
    margin-top: 12px;
}

.tabs svg {
    width: 24px;
    height: 24px;
}

.panel {
    display: flex;
    flex-direction: column;
    flex: none;
    width: 298px;
    padding: 0 9px 3px 9px;
    border-right: 2px solid #808084;
    background: #ececee;
}

.panel h2 {
    display: flex;
    align-items: center;
    gap: 12px;
    height: 30px;
    margin: 0;
    padding-left: 5px;
    font-size: 13px;
}

.panel h2 svg {
    width: 12px;
    height: 12px;
}

.tree {
    display: grid;
    grid-template: 1fr 17px / 1fr 18px;
    flex: 1;
    min-height: 0;
    border: 1px solid #606064;
    background: #ececee;
}

.tree-view {
    min-height: 0;
    overflow: hidden;
}

.tree table {
    width: 100%;
    border-collapse: collapse;
    table-layout: fixed;
}

.tree th {
    height: 17px;
    padding: 0 5px;
    border-bottom: 1px solid #808084;
    background: linear-gradient(#f4f4f6, #d4d4d8);
    font-weight: normal;
    line-height: 16px;
    text-align: left;
}

.tree th:first-child {
    width: 201px;
    padding-left: 7px;
}

.tree th + th,
.tree td + td {
    border-left: 1px solid #b8b8bc;
}

.sort {
    display: inline-block;
    width: 10px;
    height: 5px;
    margin: 0 0 2px 15px;
    background: #000;
    clip-path: polygon(50% 0, 100% 100%, 0 100%);
}

.tree td {
    height: 20px;
    padding: 0;
    border-bottom: 1px dotted #b8b8bc;
    background: #fff;
}

.tree tr:nth-child(even) td {
    background: #f8f6f8;
}

.node {
    display: flex;
    align-items: center;
    height: 19px;
    padding-left: 30px;
}

.node svg {
    width: 16px;
    height: 16px;
    margin: 0 1px;
}

.node span {
    flex: 1;
    height: 19px;
    padding-left: 1px;
    line-height: 19px;
}

.node b {
    margin-left: 9px;
    font-size: 11px;
    font-weight: normal;
}

.branch {
    width: 10px;
    height: 19px;
    border-left: 1px dotted #888;
    background: repeating-linear-gradient(90deg, #999 0 1px, transparent 1px 2px) 0 10px / 100% 1px no-repeat;
}

.node input {
    width: 12px;
    height: 12px;
    margin: 0 1px;
    border: 1px solid #000;
    appearance: none;
    background: #fff;
}

.node input:checked::before {
    display: block;
    width: 10px;
    height: 10px;
    background: #08b820;
    clip-path: polygon(5% 50%, 15% 30%, 40% 50%, 80% 0, 100% 10%, 50% 95%, 30% 95%);
    content: "";
}

.root .node {
    padding-left: 5px;
}

.fold {
    width: 9px;
    height: 9px;
    margin-right: 4px;
    border: 1px solid #909094;
    font-size: 9px;
    line-height: 7px;
}

.selected .node span,
.tree .selected td + td {
    background: #3399ff;
    color: #fff;
}

.vscroll {
    display: flex;
    flex-direction: column;
    align-items: center;
    padding: 0 1px 4px;
    border-left: 1px solid #e0e0e2;
    background: linear-gradient(#e0e0e4 16px, #f0f0f2 16px);
}

.up,
.down {
    width: 6px;
    height: 3px;
    background: #303030;
}

.up {
    margin: 25px 0 12px;
    clip-path: polygon(50% 0, 100% 100%, 0 100%);
}

.down {
    margin-top: auto;
    margin-bottom: 4px;
    clip-path: polygon(0 0, 100% 0, 50% 100%);
}

.vscroll .thumb {
    width: 14px;
    height: 26px;
    border: 1px solid #888;
    border-radius: 2px;
    background: repeating-linear-gradient(#505058 0 1px, transparent 1px 3px) center / 6px 8px no-repeat, linear-gradient(90deg, #f4f4f4, #c8c8cc);
}

.hscroll {
    display: flex;
    align-items: center;
    grid-column: 1 / 3;
    padding: 0 24px 0 7px;
    background: #f0f0f2;
}

.left,
.right {
    width: 4px;
    height: 7px;
    background: #303030;
    clip-path: polygon(100% 0, 100% 100%, 0 50%);
}

.right {
    margin-left: auto;
    clip-path: polygon(0 0, 100% 50%, 0 100%);
}

.hscroll .thumb {
    width: 188px;
    height: 15px;
    margin-left: 8px;
    border: 1px solid #888;
    border-radius: 2px;
    background: repeating-linear-gradient(90deg, #505058 0 1px, transparent 1px 3px) center / 8px 7px no-repeat, linear-gradient(#f0f0f2, #c4c4c8);
}

.splitter {
    height: 15px;
    padding-top: 3px;
    background: linear-gradient(#a0a0a4, #a0a0a4) 0 5px / 100% 1px no-repeat;
}

.splitter i {
    display: block;
    width: 50px;
    height: 6px;
    margin: 0 auto;
    border: 1px solid #b0b0b4;
    background: #d4d4d8;
}

/* graphics window */
.view {
    position: relative;
    flex: 1;
    min-width: 0;
    background: #000;
}

.model {
    width: 100%;
    height: 100%;
}

.axis {
    font: 12px "Liberation Sans", sans-serif;
}

.ime {
    position: absolute;
    right: 248px;
    bottom: 4px;
    display: flex;
    align-items: flex-end;
}

.avatar {
    width: 40px;
    height: 40px;
    border: 2px solid #3090ff;
    background: #e8ecf4;
}

.keys {
    display: flex;
    align-items: center;
    height: 25px;
    border: 1px solid #2080f0;
    background: #fff;
}

.keys button {
    width: 21px;
    color: #2080f0;
    font-weight: bold;
}

.keys svg {
    width: 14px;
    height: 14px;
    margin: 0 auto;
}
```
